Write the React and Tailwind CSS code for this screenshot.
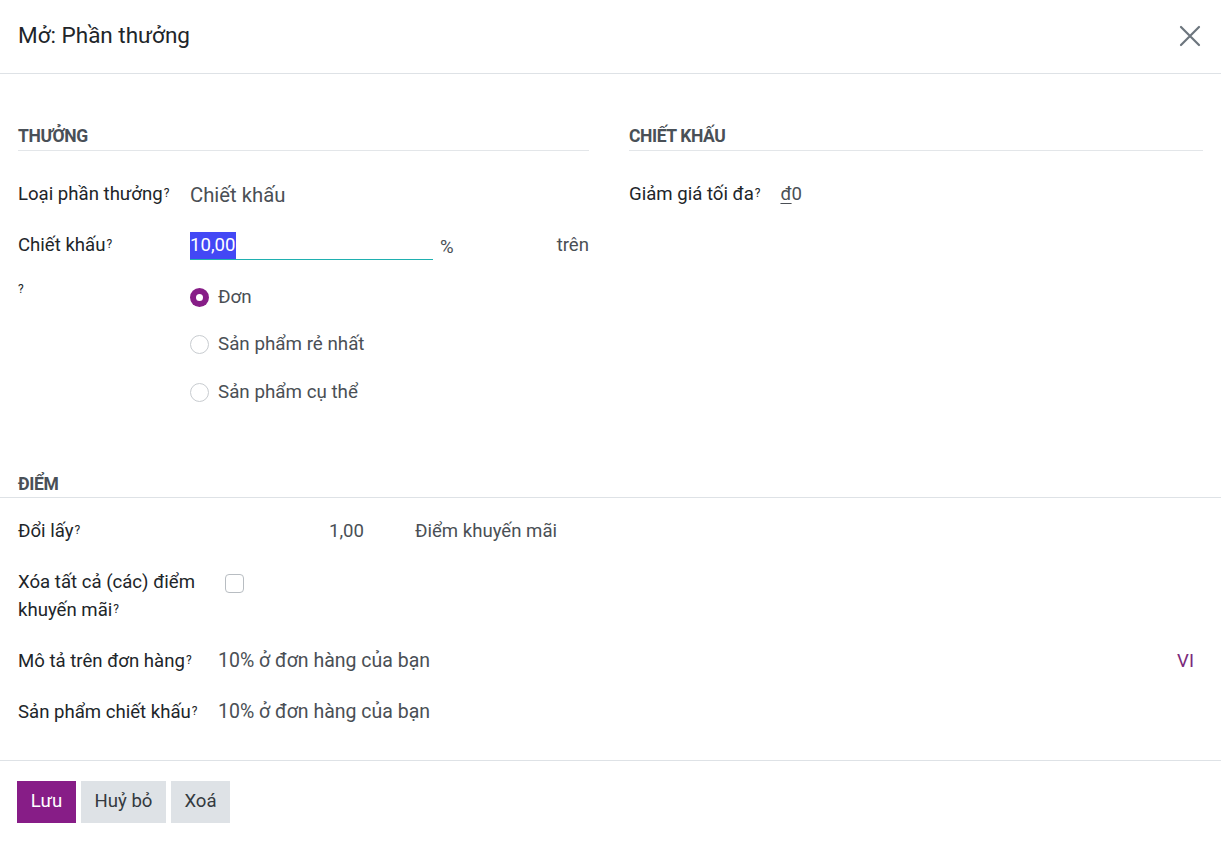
import React from "react";

const Q = () => <sup className="text-[12px] ml-[1px] relative -top-[3px]">?</sup>;

function Radio({ checked, label }) {
  return (
    <div className="flex items-center h-[20px]">
      {checked ? (
        <span className="w-[19px] h-[19px] rounded-full bg-[#871d87] flex items-center justify-center">
          <span className="w-[7px] h-[7px] rounded-full bg-white" />
        </span>
      ) : (
        <span className="w-[19px] h-[19px] rounded-full border border-[#c8ccd0] bg-white" />
      )}
      <span className="ml-[9px] text-[#4a4f55] text-[18.8px]">{label}</span>
    </div>
  );
}

export default function App() {
  return (
    <div
      className="w-[1221px] h-[843px] bg-white text-[#212529] text-[18.6px] flex flex-col"
      style={{ fontFamily: "Roboto, 'Noto Sans', sans-serif" }}
    >
      {/* header */}
      <div className="h-[74px] border-b border-[#dee2e6] flex items-center justify-between pl-[18px] pr-[20px] shrink-0">
        <h1 className="text-[22.5px] text-[#212529] leading-none -mt-[2px]">Mở: Phần thưởng</h1>
        <svg width="22" height="22" viewBox="0 0 22 22" className="-mt-[2px]">
          <path d="M2 2 L20 20 M20 2 L2 20" stroke="#6c757d" strokeWidth="2.2" strokeLinecap="round" />
        </svg>
      </div>

      {/* body */}
      <div className="flex-1 flex flex-col">
        <div className="flex pt-[50px] px-[18px] gap-[40px]">
          {/* left column */}
          <div className="w-[571px]">
            <div className="border-b border-[#e3e6e9] h-[27px]">
              <h2 className="font-bold text-[17.5px] text-[#495057] tracking-[-0.4px] leading-[25px]">THƯỞNG</h2>
            </div>
            <div className="flex mt-[29px] h-[30px] items-start">
              <div className="w-[172px] leading-[28px]">Loại phần thưởng<Q /></div>
              <div className="text-[20.3px] text-[#4a4f55] leading-[30px]">Chiết khấu</div>
            </div>
            <div className="flex mt-[21px] items-start">
              <div className="w-[172px] leading-[28px]">Chiết khấu<Q /></div>
              <div className="w-[243px] border-b border-[#1fb0b0] h-[29px] flex items-center">
                <span className="bg-[#4348f5] text-white text-[18.6px] leading-[27px] pr-[1px]">10,00</span>
              </div>
              <span className="ml-[7px] text-[#4a4f55] leading-[32px]">%</span>
              <span className="ml-auto text-[#4a4f55] leading-[28px]">trên</span>
            </div>
            <div className="flex mt-[18px]">
              <div className="w-[172px] text-[12px] leading-[20px] -mt-[2px]">?</div>
              <div className="flex flex-col gap-[27.5px] pt-[6px]">
                <Radio checked label="Đơn" />
                <Radio label="Sản phẩm rẻ nhất" />
                <Radio label="Sản phẩm cụ thể" />
              </div>
            </div>
          </div>

          {/* right column */}
          <div className="flex-1">
            <div className="border-b border-[#e3e6e9] h-[27px]">
              <h2 className="font-bold text-[17.5px] text-[#495057] tracking-[-0.4px] leading-[25px]">CHIẾT KHẤU</h2>
            </div>
            <div className="flex mt-[29px] items-start">
              <div className="leading-[28px]">Giảm giá tối đa<Q /></div>
              <div className="ml-[20px] leading-[28px] text-[#4a4f55]">
                <span className="underline underline-offset-[3px] decoration-1">đ</span>0
              </div>
            </div>
          </div>
        </div>

        {/* ĐIỂM */}
        <div className="mt-[68px] border-b border-[#dee2e6] px-[18px] h-[28px]">
          <h2 className="font-bold text-[17.5px] text-[#495057] tracking-[-0.4px] leading-[28px]">ĐIỂM</h2>
        </div>
        <div className="px-[18px] flex flex-col">
          <div className="flex items-start mt-[19px]">
            <div className="w-[311px] leading-[28px]">Đổi lấy<Q /></div>
            <div className="w-[86px] text-[#4a4f55] leading-[28px]">1,00</div>
            <div className="text-[#4a4f55] leading-[28px]">Điểm khuyến mãi</div>
          </div>
          <div className="flex items-start mt-[23px]">
            <div className="w-[207px] leading-[28px]">
              Xóa tất cả (các) điểm<br />khuyến mãi<Q />
            </div>
            <span className="mt-[6px] w-[19px] h-[19px] rounded-[4px] border border-[#b8bdc2] bg-white" />
          </div>
          <div className="flex items-start mt-[23px]">
            <div className="w-[200px] leading-[28px]">Mô tả trên đơn hàng<Q /></div>
            <div className="text-[#4a4f55] text-[19.5px] leading-[28px]">10% ở đơn hàng của bạn</div>
            <div className="ml-auto mr-[9px] text-[#7b2a7b] leading-[28px]">VI</div>
          </div>
          <div className="flex items-start mt-[23px]">
            <div className="w-[200px] leading-[28px]">Sản phẩm chiết khấu<Q /></div>
            <div className="text-[#4a4f55] text-[19.5px] leading-[28px]">10% ở đơn hàng của bạn</div>
          </div>
        </div>
      </div>

      {/* footer */}
      <div className="h-[83px] border-t border-[#dee2e6] flex items-start pt-[20px] pl-[17px] gap-[5px] shrink-0">
        <button className="h-[42px] w-[59px] bg-[#871d87] text-white text-[18.6px]">Lưu</button>
        <button className="h-[42px] w-[85px] bg-[#dee2e6] text-[#343a40] text-[18.6px]">Huỷ bỏ</button>
        <button className="h-[42px] w-[59px] bg-[#dee2e6] text-[#343a40] text-[18.6px]">Xoá</button>
      </div>
    </div>
  );
}
